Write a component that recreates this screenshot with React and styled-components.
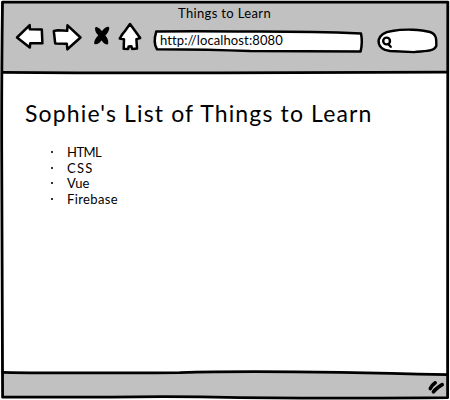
import React from "react";
import styled, { createGlobalStyle } from "styled-components";

const GlobalStyle = createGlobalStyle`
  * { box-sizing: border-box; }
  html, body { margin: 0; background: #fff; overflow: hidden; }
  body { font-family: Lato, "Open Sans", sans-serif; color: #000; }
`;

const Window = styled.div`
  position: relative;
  display: flex;
  flex-direction: column;
  width: 450px;
  height: 400px;
  padding: 2px;
`;

const Outline = styled.svg`
  position: absolute;
  inset: 0;
  width: 100%;
  height: 100%;
  overflow: visible;
  pointer-events: none;
  fill: none;
  stroke: #000;
  stroke-width: ${(p) => p.$weight || 2.8};
  stroke-linejoin: round;
  stroke-linecap: round;
`;

const Header = styled.header`
  height: 70px;
  flex: none;
  background: #c1c1c1;
`;

const Title = styled.div`
  height: 22px;
  padding: 3px 0 0 176px;
  font-size: 13px;
  line-height: 17px;
  letter-spacing: 0.35px;
  white-space: nowrap;
`;

const Toolbar = styled.nav`
  display: flex;
  align-items: flex-start;
  padding-left: 12px;
`;

const Icon = styled.svg`
  flex: none;
  display: block;
  width: ${(p) => p.$w}px;
  height: 32px;
  margin-right: ${(p) => p.$gap || 0}px;
  fill: #fff;
  stroke: #000;
  stroke-width: 2.5;
  stroke-linejoin: round;
  stroke-linecap: round;
  overflow: visible;
`;

const Field = styled.div`
  position: relative;
  flex: none;
  width: ${(p) => p.$w}px;
  height: 32px;
  margin-right: ${(p) => p.$gap || 0}px;
`;

const FieldShape = styled(Outline)`
  fill: #fff;
`;

const Url = styled.span`
  position: relative;
  display: block;
  padding: 8px 0 0 8px;
  font-size: 13px;
  line-height: 17px;
  letter-spacing: 0.12px;
  white-space: nowrap;
`;

const Content = styled.main`
  flex: 1;
  background: #fff;
  padding: 24px 0 0 23px;
`;

const Heading = styled.h1`
  margin: 0;
  font-size: 23px;
  line-height: 34px;
  font-weight: 400;
  letter-spacing: 1.14px;
  white-space: nowrap;
`;

const List = styled.ul`
  margin: 14px 0 0;
  padding: 0 0 0 24px;
  list-style: none;
`;

const Item = styled.li`
  display: flex;
  align-items: center;
  height: 15.75px;
  font-size: 13px;
  line-height: 16px;
  letter-spacing: ${(p) => p.$tracking};
  &::before {
    content: "";
    width: 2px;
    height: 2px;
    margin: 0 14px 0 2px;
    background: #333;
  }
`;

const Footer = styled.footer`
  position: relative;
  display: flex;
  justify-content: flex-end;
  height: 26px;
  flex: none;
  background: #c1c1c1;
`;

const Grip = styled.svg`
  position: relative;
  width: 22px;
  height: 26px;
  fill: none;
  stroke: #000;
  stroke-width: 3.6;
  stroke-linecap: round;
  stroke-linejoin: round;
`;

const topics = [
  { name: "HTML", tracking: "-0.55px" },
  { name: "CSS", tracking: "1.3px" },
  { name: "Vue", tracking: "0.1px" },
  { name: "Firebase", tracking: "0.38px" },
];

export default function App() {
  return (
    <>
      <GlobalStyle />
      <Window>
        <Header>
          <Title>Things to Learn</Title>
          <Toolbar>
            <Icon $w={36} viewBox="14 24 36 32">
              <path d="M17 37.5L29.7 25.2L29.8 29.2L41.8 29.4L42.4 43.3L30.2 43.3L29.8 47.6Z" />
            </Icon>
            <Icon $w={36} $gap={6} viewBox="50 24 36 32">
              <path d="M53.8 31L58 30.2L67.2 30.8L67.5 25.3L80.5 37.5L67.4 49.3L66.8 43.7L55.2 43.4Z" />
            </Icon>
            <Icon $w={24} viewBox="92 24 24 32">
              <path
                fill="#000"
                d="M96.3 28.3Q99 29 102 33.4Q105 28.3 108 27.9Q108 31 103.8 35.5Q107.6 39.5 107 43.2Q104 43 101.8 38Q98.5 43 95.4 43Q95.6 39.5 100 35.4Q96 31.5 96.3 28.3Z"
              />
            </Icon>
            <Icon $w={36} viewBox="116 24 36 32">
              <path d="M130 24L140.2 38.1L136.4 39.1L137 48.5L132.2 49L131.4 46.3L128.6 46.4L128.2 48.9L123.7 48.8L124 39.3L119.8 38.6Q122 34 125.5 30.3Z" />
            </Icon>
            <Field $w={213} $gap={12}>
              <FieldShape viewBox="152 24 213 32" $weight="2.5">
                <path d="M156.3 31.4Q210 31.1 250 31.6Q310 31.4 361 33.4Q362.8 42 360.6 51.5Q290 51.4 250 51Q210 49.5 157 49.2Q152.8 43 156.3 31.4Z" />
              </FieldShape>
              <Url>http://localhost:8080</Url>
            </Field>
            <Field $w={62}>
              <FieldShape viewBox="377 24 62 32" $weight="2.4">
                <path d="M392 31C405 28.7 421 29.5 430 32C436.5 34 436.5 39 436.3 46C434 51.5 426 50.8 414 52.1L390 51C381 50 378.2 45 378.6 40C380 34.5 385 32 392 31Z" />
                <circle cx="386.6" cy="41" r="3.4" />
                <path d="M388.4 44.2L390.7 46.8" />
              </FieldShape>
            </Field>
          </Toolbar>
        </Header>
        <Content>
          <Heading>Sophie's List of Things to Learn</Heading>
          <List>
            {topics.map((t) => (
              <Item key={t.name} $tracking={t.tracking}>{t.name}</Item>
            ))}
          </List>
        </Content>
        <Footer>
          <Outline viewBox="2 372 446 26">
            <path fill="#fff" stroke="none" d="M2 370L448 370L448 375Q390 372 300 372L2 372Z" />
            <path d="M3 372.3Q60 373.4 180 372.6C240 370.5 340 371.8 447 374.7" />
          </Outline>
          <Grip viewBox="426 372 22 26">
            <path d="M430.3 388.6Q431.8 385.2 435.2 382.8" />
            <path d="M433.4 391.8Q436 388.4 442.2 384.6" />
          </Grip>
        </Footer>
        <Outline viewBox="0 0 450 400">
          <path d="M2.5 2.1Q220 1.7 447.8 2.1Q448.4 150 447.6 397.7Q360 398.6 240 397.6Q170 396 110 397.2L2.6 397.2Q2.5 220 1.7 150Q1.5 80 2.5 2.1Z" />
          <path d="M3 72.3Q100 73.1 220 72.8Q330 72.8 447 72.2" />
        </Outline>
      </Window>
    </>
  );
}
